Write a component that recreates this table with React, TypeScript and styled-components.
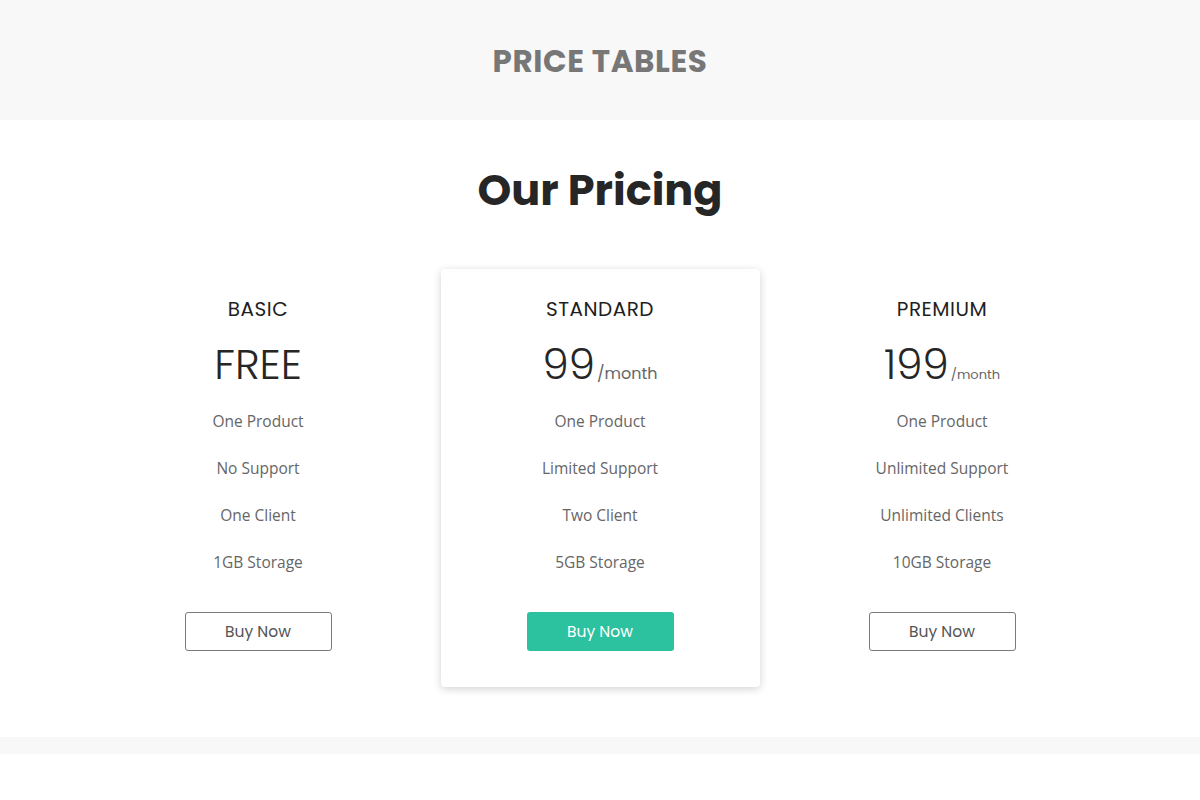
import React from 'react'
import styled, { createGlobalStyle } from 'styled-components'

const GlobalStyle = createGlobalStyle`
  html, body {
    margin: 0;
    padding: 0;
    background: #ffffff;
  }
  * {
    box-sizing: border-box;
  }
`

const heading = `'Poppins', 'Inter', 'Noto Sans', sans-serif`
const body = `'Open Sans', 'Noto Sans', sans-serif`

const Banner = styled.header`
  background: #f8f8f8;
  height: 120px;
  display: flex;
  align-items: center;
  justify-content: center;
`

const BannerTitle = styled.h1`
  margin: 2px 0 0;
  font-family: ${heading};
  font-weight: 700;
  font-size: 31px;
  letter-spacing: 0.6px;
  color: #777777;
`

const Section = styled.section`
  padding: 44px 0 50px;
  display: flex;
  flex-direction: column;
  align-items: center;
`

const SectionTitle = styled.h2`
  margin: 0 0 53px;
  font-family: ${heading};
  font-weight: 700;
  font-size: 43px;
  line-height: 52px;
  color: #262626;
`

const Grid = styled.div`
  display: grid;
  grid-template-columns: repeat(3, 319px);
  column-gap: 23px;
`

const Card = styled.div<{ $featured?: boolean }>`
  display: flex;
  flex-direction: column;
  align-items: center;
  padding: 27px 0 36px;
  border-radius: 4px;
  background: #fff;
  box-shadow: ${({ $featured }) =>
    $featured ? '0 2px 8px rgba(0, 0, 0, 0.18)' : 'none'};
`

const PlanName = styled.h3`
  margin: 0;
  font-family: ${heading};
  font-weight: 400;
  font-size: 20px;
  line-height: 26px;
  letter-spacing: 0.5px;
  color: #1f1f1f;
`

const Price = styled.div`
  margin-top: 17px;
  height: 52px;
  font-family: ${heading};
  font-weight: 300;
  font-size: 42px;
  line-height: 52px;
  color: #262626;
  white-space: nowrap;
`

const Per = styled.span<{ $small?: boolean }>`
  font-size: ${({ $small }) => ($small ? '13px' : '16px')};
  line-height: 1;
  font-weight: 400;
  color: #666;
  margin-left: 2px;
`

const Features = styled.ul`
  list-style: none;
  margin: 20px 0 0;
  padding: 0;
  display: flex;
  flex-direction: column;
  align-items: center;
  gap: 26px;
`

const Feature = styled.li`
  font-family: ${body};
  font-size: 15.5px;
  line-height: 21px;
  color: #666666;
`

const BuyButton = styled.button<{ $primary?: boolean }>`
  margin-top: 39px;
  width: 147px;
  height: 39px;
  border-radius: 3px;
  font-family: ${heading};
  font-size: 15.5px;
  cursor: pointer;
  border: ${({ $primary }) => ($primary ? 'none' : '1px solid #7a7a7a')};
  background: ${({ $primary }) => ($primary ? '#2cc19f' : '#fff')};
  color: ${({ $primary }) => ($primary ? '#fff' : '#555')};
`

const Strip = styled.div`
  height: 17px;
  background: #f8f8f8;
`

const plans = [
  {
    name: 'BASIC',
    price: 'FREE',
    per: '',
    features: ['One Product', 'No Support', 'One Client', '1GB Storage'],
  },
  {
    name: 'STANDARD',
    price: '99',
    per: '/month',
    featured: true,
    features: ['One Product', 'Limited Support', 'Two Client', '5GB Storage'],
  },
  {
    name: 'PREMIUM',
    price: '199',
    per: '/month',
    small: true,
    features: [
      'One Product',
      'Unlimited Support',
      'Unlimited Clients',
      '10GB Storage',
    ],
  },
]

export default function App() {
  return (
    <>
      <GlobalStyle />
      <Banner>
        <BannerTitle>PRICE TABLES</BannerTitle>
      </Banner>
      <Section>
        <SectionTitle>Our Pricing</SectionTitle>
        <Grid>
          {plans.map((p) => (
            <Card key={p.name} $featured={p.featured}>
              <PlanName>{p.name}</PlanName>
              <Price>
                {p.price}
                {p.per && <Per $small={p.small}>{p.per}</Per>}
              </Price>
              <Features>
                {p.features.map((f) => (
                  <Feature key={f}>{f}</Feature>
                ))}
              </Features>
              <BuyButton $primary={p.featured}>Buy Now</BuyButton>
            </Card>
          ))}
        </Grid>
      </Section>
      <Strip />
    </>
  )
}
